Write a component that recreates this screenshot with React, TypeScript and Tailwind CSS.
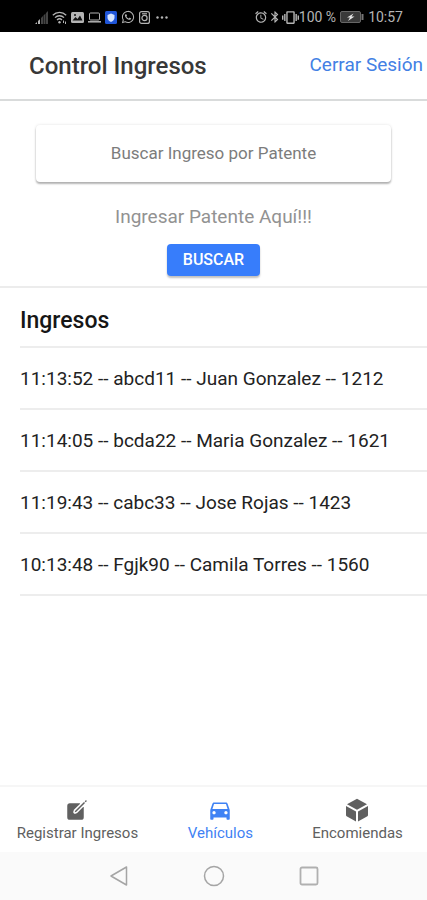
import type { ReactNode } from "react";
import { IoCreate, IoLogoWhatsapp } from "react-icons/io5";
import { MdAlarm, MdBluetooth, MdDirectionsCar, MdVibration } from "react-icons/md";

const ingresos = [
  { hora: "11:13:52", patente: "abcd11", nombre: "Juan Gonzalez", depto: "1212" },
  { hora: "11:14:05", patente: "bcda22", nombre: "Maria Gonzalez", depto: "1621" },
  { hora: "11:19:43", patente: "cabc33", nombre: "Jose Rojas", depto: "1423" },
  { hora: "10:13:48", patente: "Fgjk90", nombre: "Camila Torres", depto: "1560" },
];

function StatusBar() {
  return (
    <div className="flex h-8 items-center justify-between bg-black pt-0.5 pr-6 pl-[35px] text-[#b4b4b4]">
      <div className="flex items-center gap-1">
        <svg width="13" height="13" viewBox="0 0 13 13">
          <path d="M2 11v2H0zM5 8v5H3v-3z" fill="currentColor" />
          <path d="M8 5v8H6V7zM10.500 2.500V13h-2V4.500zM13 0v13h-2V2z" fill="#444" />
        </svg>
        <svg width="15" height="13" viewBox="0 0 15 13" fill="none" stroke="currentColor" strokeWidth="1.3">
          <path d="M.8 4.2a9.5 9.5 0 0 1 13.4 0M3 6.6a6.4 6.4 0 0 1 9 0M5 9a3.6 3.6 0 0 1 5 0" />
          <circle cx="7.5" cy="11.3" r="1.2" fill="currentColor" stroke="none" />
          <path d="M11.5 9.500v2.500M13.500 10.500v2.500" strokeWidth="1" />
        </svg>
        <svg width="13" height="11" viewBox="0 0 13 11">
          <rect width="13" height="11" rx="1.500" fill="currentColor" />
          <path d="M1.500 8.500 4.500 5l2 2L9 3.500l2.500 5z" fill="#111" />
          <circle cx="4" cy="3" r="1" fill="#111" />
        </svg>
        <svg width="13" height="11" viewBox="0 0 13 11" fill="none" stroke="currentColor">
          <rect x="1.500" y="1" width="10" height="7" rx="1" />
          <path d="M0 9.800h13" strokeWidth="1.500" />
        </svg>
        <svg width="12" height="13" viewBox="0 0 12 13">
          <rect width="12" height="13" rx="1.500" fill="#1f55d8" />
          <path d="M6 2.500 9.500 4v2.500C9.500 8.500 8 10 6 11 4 10 2.500 8.500 2.500 6.500V4z" fill="#d5e4ff" />
        </svg>
        <IoLogoWhatsapp size={14} />
        <svg width="11" height="13" viewBox="0 0 11 13" fill="none" stroke="currentColor" strokeWidth="1.200">
          <rect x=".6" y=".6" width="9.800" height="11.800" rx="2" />
          <circle cx="5.500" cy="7" r="2.600" />
          <path d="M3 2.800h5" />
        </svg>
        <svg className="ml-0.5" width="12" height="3" viewBox="0 0 12 3" fill="currentColor">
          <circle cx="1.500" cy="1.500" r="1.200" />
          <circle cx="6" cy="1.500" r="1.200" />
          <circle cx="10.500" cy="1.500" r="1.200" />
        </svg>
      </div>
      <div className="flex items-center text-sm">
        <MdAlarm size={14} />
        <MdBluetooth size={14} />
        <MdVibration size={17} />
        <span>100 %</span>
        <svg className="mx-1" width="24" height="12" viewBox="0 0 24 12">
          <rect x=".5" y=".5" width="20" height="11" rx="1.500" fill="#3a3a3a" stroke="#666" />
          <path d="M22.500 3v6" stroke="#777" strokeWidth="2" />
          <path d="M13.500 2.500 7 6.500h3l-2 3.500 6.500-4.500h-3z" fill="#e5e5e5" />
        </svg>
        <time>10:57</time>
      </div>
    </div>
  );
}

function Header() {
  return (
    <header className="flex h-[69px] items-center justify-between border-b-2 border-[#d9dbdb] pr-1 pl-[29px]">
      <h1 className="text-2xl font-medium text-[#383838]">Control Ingresos</h1>
      <a href="#salir" className="text-[19px] text-[#4380e4]">
        Cerrar Sesión
      </a>
    </header>
  );
}

function Buscador() {
  return (
    <form
      className="flex flex-col items-center border-b-2 border-[#ececec] px-9 pt-6 pb-2.5"
      onSubmit={(e) => e.preventDefault()}
    >
      <label
        htmlFor="patente"
        className="flex h-[57px] w-full items-center justify-center rounded-sm text-[17px] text-[#7c7c7c] shadow-[0_2px_2px_rgba(0,0,0,0.28),0_0_3px_rgba(0,0,0,0.12)]"
      >
        Buscar Ingreso por Patente
      </label>
      <input
        id="patente"
        type="text"
        placeholder="Ingresar Patente Aquí!!!"
        className="mt-4 h-9 w-full text-center text-[19px] text-black outline-none placeholder:text-[#929292]"
      />
      <button
        type="submit"
        className="mt-2.5 h-8 rounded bg-[#377dfb] px-4 text-base font-medium text-white shadow-[0_2px_2px_rgba(0,0,0,0.25)]"
      >
        BUSCAR
      </button>
    </form>
  );
}

function CubeIcon() {
  return (
    <svg width="24" height="24" viewBox="0 0 24 24" fill="currentColor">
      <path d="M12 .8 22 6.300 12 11.700 2 6.300z" />
      <path d="M1 8l10 5.400v10L1.600 18.200Q1 17.800 1 17zM23 8l-10 5.400v10l9.400-5.200Q23 17.800 23 17z" />
    </svg>
  );
}

function Tab({ href, label, active, children }: { href: string; label: string; active?: boolean; children: ReactNode }) {
  return (
    <a
      href={href}
      className={`flex flex-col items-center justify-center pt-1 text-[15px] ${active ? "text-[#3f82f4]" : "text-[#606060]"}`}
    >
      <span className="flex h-6 items-center">{children}</span>
      <span>{label}</span>
    </a>
  );
}

export default function App() {
  return (
    <div className="flex min-h-screen flex-col bg-white font-[Roboto,sans-serif]">
      <StatusBar />
      <Header />
      <main className="flex-1">
        <Buscador />
        <section className="pl-5">
          <h2 className="pt-[18px] pb-[10px] text-[23px] leading-[30px] font-medium text-[#161616]">Ingresos</h2>
          <ul className="border-t-2 border-[#ededed]">
            {ingresos.map((i) => (
              <li key={i.hora} className="flex h-[62px] items-center border-b-2 border-[#ededed] pt-0.5 text-[19px] text-[#222]">
                {i.hora} -- {i.patente} -- {i.nombre} -- {i.depto}
              </li>
            ))}
          </ul>
        </section>
      </main>
      <nav className="grid h-[67px] grid-cols-[38fr_34fr_35fr] border-t-2 border-[#f6f6f6] pl-0.5">
        <Tab href="#registrar" label="Registrar Ingresos">
          <IoCreate size={24} />
        </Tab>
        <Tab href="#vehiculos" label="Vehículos" active>
          <MdDirectionsCar size={26} />
        </Tab>
        <Tab href="#encomiendas" label="Encomiendas">
          <CubeIcon />
        </Tab>
      </nav>
      <div className="flex h-12 items-center justify-center gap-[73px] bg-[#fafafa]">
        <button type="button" aria-label="Atrás">
          <svg width="22" height="22" viewBox="0 0 22 22" fill="none" stroke="#a5a5a5" strokeWidth="1.500" strokeLinejoin="round">
            <path d="M18.500 2v18L3 11z" />
          </svg>
        </button>
        <button type="button" aria-label="Inicio">
          <svg width="22" height="22" viewBox="0 0 22 22" fill="none" stroke="#a5a5a5" strokeWidth="1.500">
            <circle cx="11" cy="11" r="9.500" />
          </svg>
        </button>
        <button type="button" aria-label="Recientes">
          <svg width="22" height="22" viewBox="0 0 22 22" fill="none" stroke="#b0b0b0" strokeWidth="1.800">
            <rect x="2.500" y="2.500" width="17" height="17" rx="1.500" />
          </svg>
        </button>
      </div>
    </div>
  );
}
